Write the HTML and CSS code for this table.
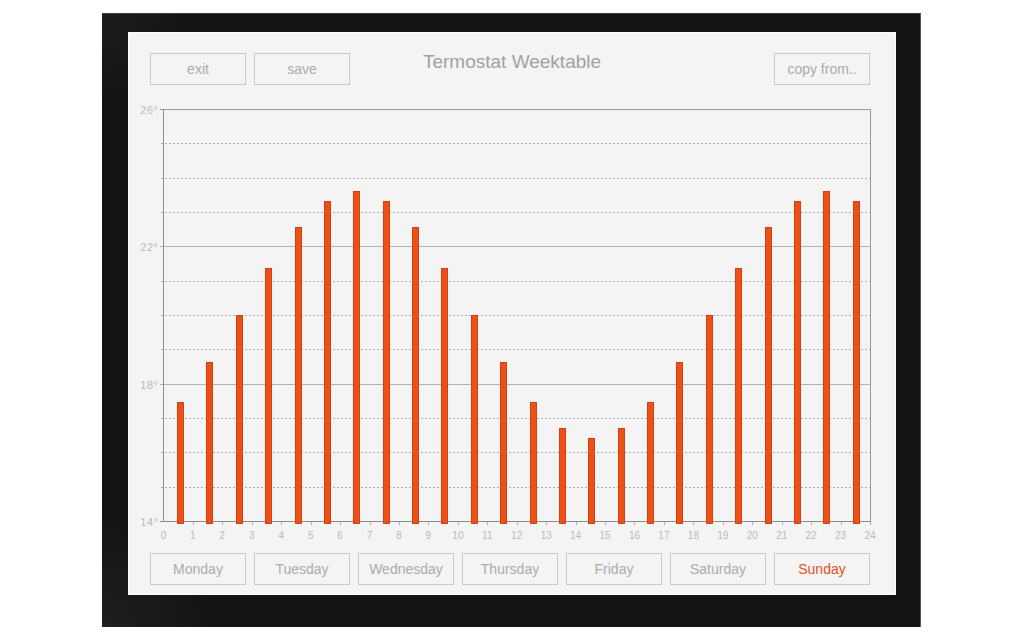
FILE: index.html
```html
<!DOCTYPE html>
<html>
<head>
<meta charset="utf-8">
<title>Termostat Weektable</title>
<link rel="stylesheet" href="styles.css">
</head>
<body>
<div class="frame">
  <div class="panel">
    <div class="header">
      <div class="btn-group">
        <button class="btn">exit</button>
        <button class="btn">save</button>
      </div>
      <h1 class="title">Termostat Weektable</h1>
      <div class="btn-group right">
        <button class="btn">copy from..</button>
      </div>
    </div>
    <svg class="chart" width="766" height="445" viewBox="0 0 766 445">
      <g class="dotted">
        <line x1="31.5" y1="387.5" x2="741" y2="387.5"/>
        <line x1="31.5" y1="352.5" x2="741" y2="352.5"/>
        <line x1="31.5" y1="318.5" x2="741" y2="318.5"/>
        <line x1="31.5" y1="249.5" x2="741" y2="249.5"/>
        <line x1="31.5" y1="215.5" x2="741" y2="215.5"/>
        <line x1="31.5" y1="181.5" x2="741" y2="181.5"/>
        <line x1="31.5" y1="112.5" x2="741" y2="112.5"/>
        <line x1="31.5" y1="78.5" x2="741" y2="78.5"/>
        <line x1="31.5" y1="43.5" x2="741" y2="43.5"/>
      </g>
      <g class="solid">
        <line x1="31" y1="284.5" x2="741" y2="284.5"/>
        <line x1="31" y1="146.5" x2="741" y2="146.5"/>
      </g>
      <g class="frame-lines">
        <line x1="31" y1="9.5" x2="741.5" y2="9.5"/>
        <line x1="741.5" y1="9.5" x2="741.5" y2="421.5"/>
      </g>
      <g class="axis">
        <line x1="34.5" y1="9" x2="34.5" y2="422"/>
        <line x1="31" y1="421.5" x2="742" y2="421.5"/>
      </g>
      <g class="ticks">
        <line x1="64.5" y1="421.5" x2="64.5" y2="425"/>
        <line x1="93.5" y1="421.5" x2="93.5" y2="425"/>
        <line x1="123.5" y1="421.5" x2="123.5" y2="425"/>
        <line x1="152.5" y1="421.5" x2="152.5" y2="425"/>
        <line x1="182.5" y1="421.5" x2="182.5" y2="425"/>
        <line x1="211.5" y1="421.5" x2="211.5" y2="425"/>
        <line x1="241.5" y1="421.5" x2="241.5" y2="425"/>
        <line x1="270.5" y1="421.5" x2="270.5" y2="425"/>
        <line x1="299.5" y1="421.5" x2="299.5" y2="425"/>
        <line x1="329.5" y1="421.5" x2="329.5" y2="425"/>
        <line x1="358.5" y1="421.5" x2="358.5" y2="425"/>
        <line x1="388.5" y1="421.5" x2="388.5" y2="425"/>
        <line x1="417.5" y1="421.5" x2="417.5" y2="425"/>
        <line x1="447.5" y1="421.5" x2="447.5" y2="425"/>
        <line x1="476.5" y1="421.5" x2="476.5" y2="425"/>
        <line x1="505.5" y1="421.5" x2="505.5" y2="425"/>
        <line x1="535.5" y1="421.5" x2="535.5" y2="425"/>
        <line x1="564.5" y1="421.5" x2="564.5" y2="425"/>
        <line x1="594.5" y1="421.5" x2="594.5" y2="425"/>
        <line x1="623.5" y1="421.5" x2="623.5" y2="425"/>
        <line x1="653.5" y1="421.5" x2="653.5" y2="425"/>
        <line x1="682.5" y1="421.5" x2="682.5" y2="425"/>
        <line x1="712.5" y1="421.5" x2="712.5" y2="425"/>
        <line x1="741.5" y1="421.5" x2="741.5" y2="425"/>
      </g>
      <g class="ylabels">
        <text x="29.5" y="14">26°</text>
        <text x="29.5" y="151">22°</text>
        <text x="29.5" y="289">18°</text>
        <text x="29.5" y="426">14°</text>
      </g>
      <g class="xlabels">
        <text x="34.5" y="438.5">0</text>
        <text x="63.9" y="438.5">1</text>
        <text x="93.4" y="438.5">2</text>
        <text x="122.8" y="438.5">3</text>
        <text x="152.3" y="438.5">4</text>
        <text x="181.7" y="438.5">5</text>
        <text x="211.1" y="438.5">6</text>
        <text x="240.6" y="438.5">7</text>
        <text x="270" y="438.5">8</text>
        <text x="299.4" y="438.5">9</text>
        <text x="328.9" y="438.5">10</text>
        <text x="358.3" y="438.5">11</text>
        <text x="387.8" y="438.5">12</text>
        <text x="417.2" y="438.5">13</text>
        <text x="446.6" y="438.5">14</text>
        <text x="476.1" y="438.5">15</text>
        <text x="505.5" y="438.5">16</text>
        <text x="534.9" y="438.5">17</text>
        <text x="564.4" y="438.5">18</text>
        <text x="593.8" y="438.5">19</text>
        <text x="623.3" y="438.5">20</text>
        <text x="652.7" y="438.5">21</text>
        <text x="682.1" y="438.5">22</text>
        <text x="711.6" y="438.5">23</text>
        <text x="741" y="438.5">24</text>
      </g>
      <g class="bars">
        <rect x="48.5" y="302.5" width="6" height="121"/>
        <rect x="77.5" y="262.5" width="6" height="161"/>
        <rect x="107.5" y="215.5" width="6" height="208"/>
        <rect x="136.5" y="168.5" width="6" height="255"/>
        <rect x="166.5" y="127.5" width="6" height="296"/>
        <rect x="195.5" y="101.5" width="6" height="322"/>
        <rect x="224.5" y="91.5" width="6" height="332"/>
        <rect x="254.5" y="101.5" width="6" height="322"/>
        <rect x="283.5" y="127.5" width="6" height="296"/>
        <rect x="312.5" y="168.5" width="6" height="255"/>
        <rect x="342.5" y="215.5" width="6" height="208"/>
        <rect x="371.5" y="262.5" width="6" height="161"/>
        <rect x="401.5" y="302.5" width="6" height="121"/>
        <rect x="430.5" y="328.5" width="6" height="95"/>
        <rect x="459.5" y="338.5" width="6" height="85"/>
        <rect x="489.5" y="328.5" width="6" height="95"/>
        <rect x="518.5" y="302.5" width="6" height="121"/>
        <rect x="547.5" y="262.5" width="6" height="161"/>
        <rect x="577.5" y="215.5" width="6" height="208"/>
        <rect x="606.5" y="168.5" width="6" height="255"/>
        <rect x="636.5" y="127.5" width="6" height="296"/>
        <rect x="665.5" y="101.5" width="6" height="322"/>
        <rect x="694.5" y="91.5" width="6" height="332"/>
        <rect x="724.5" y="101.5" width="6" height="322"/>
      </g>
    </svg>
    <div class="days">
      <button class="btn">Monday</button>
      <button class="btn">Tuesday</button>
      <button class="btn">Wednesday</button>
      <button class="btn">Thursday</button>
      <button class="btn">Friday</button>
      <button class="btn">Saturday</button>
      <button class="btn active">Sunday</button>
    </div>
  </div>
</div>
</body>
</html>
```

FILE: styles.css
```css
html, body {
  margin: 0;
  padding: 0;
  background: #ffffff;
}

body {
  font-family: "Liberation Sans", Arial, sans-serif;
  overflow: hidden;
}

.frame {
  box-sizing: border-box;
  width: 819px;
  height: 614px;
  margin: 13px 0 0 102px;
  padding: 19px 25px 32px 26px;
  background:
    radial-gradient(circle at 0% 100%, #1f1f1f 0, rgba(25,25,25,0) 110px),
    radial-gradient(circle at 0% 0%, #1c1c1c 0, rgba(25,25,25,0) 90px),
    #131313;
  border-top: 1px solid #3c3c3c;
  border-right: 1px solid #555555;
}

.panel {
  box-sizing: border-box;
  width: 768px;
  height: 563px;
  margin-top: -1px;
  background: #f4f4f4;
  border: 1px solid #fcfcfc;
  display: flex;
  flex-direction: column;
}

.header {
  display: grid;
  grid-template-columns: 1fr auto 1fr;
  align-items: start;
  margin-top: 20px;
  padding: 0 25px 0 21px;
  height: 32px;
}

.btn-group {
  display: flex;
  gap: 8px;
}

.btn-group.right {
  justify-content: flex-end;
}

.btn {
  box-sizing: border-box;
  width: 96px;
  height: 32px;
  margin: 0;
  padding: 0;
  background: transparent;
  border: 1px solid #c9c9c9;
  border-radius: 0;
  color: #ababab;
  font-family: "Liberation Sans", Arial, sans-serif;
  font-size: 14px;
  line-height: 30px;
  text-align: center;
}

.btn.active {
  color: #e8501a;
}

.title {
  margin: -2px 0 0 4px;
  font-size: 19px;
  font-weight: normal;
  line-height: 22px;
  color: #a2a2a2;
}

.chart {
  display: block;
  margin-top: 15px;
  width: 766px;
  height: 445px;
}

.chart line {
  shape-rendering: crispEdges;
}

.dotted line {
  stroke: #adadad;
  stroke-width: 1;
  stroke-dasharray: 2 2;
}

.solid line {
  stroke: #b3b3b3;
  stroke-width: 1;
}

.frame-lines line {
  stroke: #9a9a9a;
  stroke-width: 1;
}

.axis line {
  stroke: #8c8c8c;
  stroke-width: 1;
}

.ticks line {
  stroke: #b0b0b0;
  stroke-width: 1;
}

.ylabels text {
  font-family: "Liberation Sans", Arial, sans-serif;
  font-size: 11px;
  letter-spacing: 0.5px;
  fill: #b9b9b9;
  text-anchor: end;
}

.xlabels text {
  font-family: "Liberation Sans", Arial, sans-serif;
  font-size: 10px;
  fill: #b9b9b9;
  text-anchor: middle;
}

.bars rect {
  fill: #ea5116;
  stroke: #dc3d0e;
  stroke-width: 1;
}

.days {
  display: grid;
  grid-template-columns: repeat(7, 96px);
  gap: 8px;
  margin-top: 8px;
  padding: 0 25px 0 21px;
}
```
